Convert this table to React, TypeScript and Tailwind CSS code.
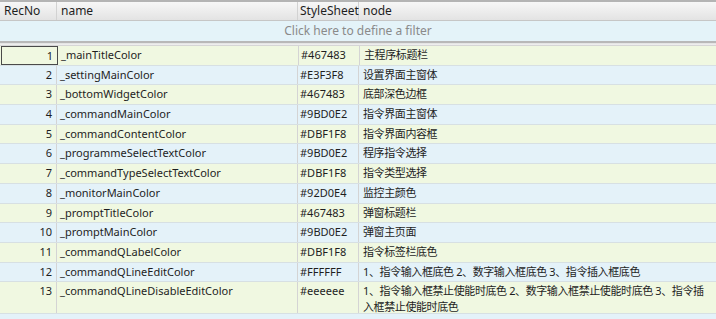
import { FC } from "react";

// ──────────────────────────────────────────────────────────────
// Style sheet colour table (grid view with filter row)
interface ColorRow {
  recNo: number;
  name: string;
  style: string;
  node: string[];
}

const rows: ColorRow[] = [
  { recNo: 1, name: "_mainTitleColor", style: "#467483", node: ["主程序标题栏"] },
  { recNo: 2, name: "_settingMainColor", style: "#E3F3F8", node: ["设置界面主窗体"] },
  { recNo: 3, name: "_bottomWidgetColor", style: "#467483", node: ["底部深色边框"] },
  { recNo: 4, name: "_commandMainColor", style: "#9BD0E2", node: ["指令界面主窗体"] },
  { recNo: 5, name: "_commandContentColor", style: "#DBF1F8", node: ["指令界面内容框"] },
  { recNo: 6, name: "_programmeSelectTextColor", style: "#9BD0E2", node: ["程序指令选择"] },
  { recNo: 7, name: "_commandTypeSelectTextColor", style: "#DBF1F8", node: ["指令类型选择"] },
  { recNo: 8, name: "_monitorMainColor", style: "#92D0E4", node: ["监控主颜色"] },
  { recNo: 9, name: "_promptTitleColor", style: "#467483", node: ["弹窗标题栏"] },
  { recNo: 10, name: "_promptMainColor", style: "#9BD0E2", node: ["弹窗主页面"] },
  { recNo: 11, name: "_commandQLabelColor", style: "#DBF1F8", node: ["指令标签栏底色"] },
  {
    recNo: 12,
    name: "_commandQLineEditColor",
    style: "#FFFFFF",
    node: ["1、指令输入框底色 2、数字输入框底色 3、指令插入框底色"],
  },
  {
    recNo: 13,
    name: "_commandQLineDisableEditColor",
    style: "#eeeeee",
    node: [
      "1、指令输入框禁止使能时底色 2、数字输入框禁止使能时底色 3、指令插",
      "入框禁止使能时底色",
    ],
  },
];

const App: FC = () => {
  return (
    <div
      className="w-[716px] h-[319px] overflow-hidden bg-white text-[11px] text-[#1e1e1e] leading-[16px]"
      style={{ fontFamily: '"Noto Sans", "Noto Sans CJK SC", sans-serif' }}
    >
      {/* Header */}
      <div className="border-t-2 border-[#b4b4b4]">
        <div className="flex h-[19px] bg-gradient-to-b from-[#f7f7f7] to-[#e3e3e3] border-b border-[#c6c6c6] items-center text-[12px]">
          <div className="w-[57px] shrink-0 pl-[4px] border-r border-[#d2d2d2] h-full flex items-center">RecNo</div>
          <div className="w-[241px] shrink-0 pl-[4px] border-r border-[#d2d2d2] h-full flex items-center">name</div>
          <div className="w-[61px] shrink-0 pl-[2px] border-r border-[#d2d2d2] h-full flex items-center">StyleSheet</div>
          <div className="flex-1 pl-[4px] h-full flex items-center">node</div>
        </div>
      </div>

      {/* Filter row */}
      <div className="h-[20px] bg-[#e4f3f9] flex items-center justify-center text-[#8a8a8a] text-[12px]">
        Click here to define a filter
      </div>

      {/* Separator */}
      <div className="h-[5px] border-t-2 border-[#b8b8b8] bg-gradient-to-b from-[#e0e0e0] to-[#f2f2f2] border-b border-b-[#d6d6d6]" />

      {/* Rows */}
      <div className="flex flex-col">
        {rows.map((row) => {
          const even = row.recNo % 2 === 0;
          const multi = row.node.length > 1;
          return (
            <div
              key={row.recNo}
              className={`flex border-b border-[#d7e0e3] ${multi ? "h-[32px]" : "h-[19.7px]"} ${
                even ? "bg-[#e4f2f9]" : "bg-[#f0f8e1]"
              }`}
            >
              <div
                className={`w-[57px] shrink-0 text-right pr-[4px] pt-[1px] border-r ${
                  row.recNo === 1 ? "border border-[#4a4a4a] ml-[1px] w-[56px]" : "border-[#d4d4d4]"
                }`}
              >
                {row.recNo}
              </div>
              <div className="w-[241px] shrink-0 pl-[3px] pt-[1px] border-r border-[#d4d4d4]">{row.name}</div>
              <div className="w-[61px] shrink-0 pl-[2px] pt-[1px] border-r border-[#d4d4d4]">{row.style}</div>
              <div className="flex-1 pl-[4px] pt-[1px] whitespace-nowrap tracking-[-0.4px]">
                {row.node.map((line, i) => (
                  <div key={i}>{line}</div>
                ))}
              </div>
            </div>
          );
        })}
        <div className="h-[6px] bg-[#e4f2f9]" />
      </div>
    </div>
  );
};

export default App;
